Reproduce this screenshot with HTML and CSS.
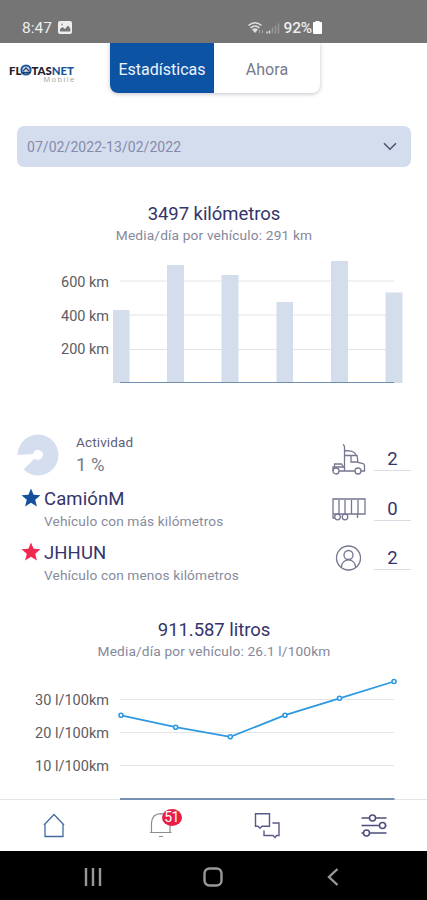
FILE: index.html
```
<!DOCTYPE html>
<html lang="es">
<head>
<meta charset="utf-8">
<title>Flotasnet Mobile</title>
<meta name="viewport" content="width=device-width, initial-scale=1.0">
<link rel="stylesheet" href="styles.css">
</head>
<body>
<div class="phone">
	<div class="status-bar">
		<span class="status-time">8:47</span>
		<svg class="status-picture" width="14" height="13" viewBox="0 0 14 13">
			<rect width="14" height="13" rx="2" fill="#eee"/>
			<path d="M2 10.5V8l2.500-2 2.500 2 3-3.500 2.300 3v3z" fill="#777"/>
			<circle cx="4" cy="3.500" r="1" fill="#999"/>
		</svg>
		<svg class="status-signal" width="34" height="14" viewBox="0 0 34 14">
			<g fill="none" stroke="#ddd" stroke-width="1.600">
				<path d="M1.500 4.500Q8 -1 14.500 4.500"/>
				<path d="M3.500 7Q8 3 12.500 7"/>
			</g>
			<path d="M5 8.500Q8 6 11 8.500L8 12z" fill="#ddd"/>
			<path d="M12.500 12v-3M15.500 12v-3" stroke="#aaa" stroke-width="1"/>
			<path d="M20 12.500v-2M22.500 12.500v-3" stroke="#ddd" stroke-width="1.500"/>
			<path d="M25.500 12.500v-6M28.500 12.500v-8M31.500 12.500v-10" stroke="#999" stroke-width="1.500"/>
		</svg>
		<span class="status-battery">92%</span>
		<svg width="9" height="13" viewBox="0 0 9 13">
			<path d="M2.500 0h4v1H8a1 1 0 0 1 1 1v10a1 1 0 0 1-1 1H1a1 1 0 0 1-1-1V2a1 1 0 0 1 1-1h1.500z" fill="#fff"/>
		</svg>
	</div>

	<div class="content">
		<div class="header">
			<div class="logo">
				<div class="logo-name">
					<span>FL</span>
					<svg width="12" height="12" viewBox="0 0 12 12">
						<circle cx="6" cy="6" r="4.600" fill="#dce8f5" stroke="#1e579c" stroke-width="2"/>
						<path d="M1 8.500h10M3 7l3-3 3 3" fill="none" stroke="#1e3f70" stroke-width="1.300"/>
					</svg>
					<span>TAS</span><span class="logo-net">NET</span>
				</div>
				<div class="logo-sub">Mobile</div>
			</div>
			<div class="tabs">
				<div class="tab active">Estadísticas</div>
				<div class="tab">Ahora</div>
			</div>
		</div>

		<div class="date-select">
			<span>07/02/2022-13/02/2022</span>
			<svg width="14" height="9" viewBox="0 0 14 9">
				<path d="M1 1.200l6 6 6-6" fill="none" stroke="#4c5370" stroke-width="1.600"/>
			</svg>
		</div>

		<div class="chart-head">
			<div class="chart-title">3497 kilómetros</div>
			<div class="chart-sub">Media/día por vehículo: 291 km</div>
		</div>
		<svg class="chart" width="427" height="145" viewBox="0 250 427 145">
			<path class="grid" d="M120 281H394M120 315H394M120 349.500H394"/>
			<g class="bars">
				<rect x="113" y="310" width="16.500" height="73"/>
				<rect x="167" y="265" width="17" height="118"/>
				<rect x="221.500" y="275" width="17" height="108"/>
				<rect x="276.500" y="302" width="16.500" height="81"/>
				<rect x="331" y="261" width="17" height="122"/>
				<rect x="385.500" y="292.500" width="17" height="90.500"/>
			</g>
			<path class="base" d="M120 382.500H394"/>
			<g class="labels">
				<text x="109" y="286.500" textLength="48">600 km</text>
				<text x="109" y="320.500" textLength="48">400 km</text>
				<text x="109" y="354" textLength="48">200 km</text>
			</g>
		</svg>

		<div class="stats">
			<div class="stats-left">
				<div class="activity">
					<svg width="42" height="42" viewBox="0 0 42 42">
						<path d="M0.500 21A20.500 20.500 0 1 1 6.500 35.500L17.500 24.500A5 5 0 1 0 16 20z" fill="#d4deee"/>
					</svg>
					<div>
						<div class="activity-name">Actividad</div>
						<div class="activity-value">1 %</div>
					</div>
				</div>
				<div class="vehicle">
					<svg width="20" height="20" viewBox="0 0 20 20">
						<path d="M10 .5l2.600 6.300 6.900.5-5.300 4.400 1.700 6.800-5.900-3.700-5.900 3.700 1.700-6.800L.5 7.300l6.900-.5z" fill="#14509c"/>
					</svg>
					<div>
						<div class="vehicle-name">CamiónM</div>
						<div class="vehicle-note">Vehículo con más kilómetros</div>
					</div>
				</div>
				<div class="vehicle">
					<svg width="20" height="20" viewBox="0 0 20 20">
						<path d="M10 .5l2.600 6.300 6.900.5-5.300 4.400 1.700 6.800-5.900-3.700-5.900 3.700 1.700-6.800L.5 7.300l6.900-.5z" fill="#f22850"/>
					</svg>
					<div>
						<div class="vehicle-name">JHHUN</div>
						<div class="vehicle-note">Vehículo con menos kilómetros</div>
					</div>
				</div>
			</div>
			<div class="stats-right">
				<div class="count">
					<!-- truck -->
					<svg class="line-icon" width="36" height="32" viewBox="0 0 36 32">
						<path d="M8 27h5.500M13.500 27V3q0-1.500-1.500-2.500M14 6.500l6 .7q4 .8 5 4.300M14 11.500h12l1 7 5 1.200q1.500.5 1.500 2V27H30M20 12v6h7M13.500 27H24M2 27v-4h11.500M3.500 23v-3h7l2 3"/>
						<circle cx="5" cy="27" r="3"/>
						<circle cx="27" cy="27" r="3"/>
					</svg>
					<span>2</span>
				</div>
				<div class="count">
					<!-- trailer -->
					<svg class="line-icon" width="36" height="32" viewBox="0 0 36 32">
						<path d="M2 5h32v15H2zM8 6v14M14 6v14M20.500 6v14M27 6v14M2 20v4h2M26.500 20.500v3.500"/>
						<circle cx="6.500" cy="23" r="2.800"/>
						<circle cx="14" cy="23" r="2.800"/>
					</svg>
					<span>0</span>
				</div>
				<div class="count">
					<!-- driver -->
					<svg class="line-icon" width="36" height="32" viewBox="0 0 36 32">
						<circle cx="17.500" cy="15" r="12"/>
						<circle cx="17.500" cy="12" r="4.500"/>
						<path d="M10.500 24.800v-1a7 7 0 0 1 14 0v1"/>
					</svg>
					<span>2</span>
				</div>
			</div>
		</div>

		<div class="chart-head">
			<div class="chart-title">911.587 litros</div>
			<div class="chart-sub">Media/día por vehículo: 26.1 l/100km</div>
		</div>
		<svg class="chart" width="427" height="134" viewBox="0 666 427 134">
			<path class="grid" d="M120 699.500H394M120 732.500H394M120 765.500H394M0 799.500H427"/>
			<g class="labels">
				<text x="109" y="705" textLength="74">30 l/100km</text>
				<text x="109" y="738" textLength="74">20 l/100km</text>
				<text x="109" y="771" textLength="74">10 l/100km</text>
			</g>
			<path class="serie" d="M121 715.300L175.700 727.200L230.300 736.800L285 715.200L339.500 698.300L394 681.500"/>
			<g class="dots">
				<circle cx="121" cy="715.300" r="2"/>
				<circle cx="175.700" cy="727.200" r="2"/>
				<circle cx="230.300" cy="736.800" r="2"/>
				<circle cx="285" cy="715.200" r="2"/>
				<circle cx="339.500" cy="698.300" r="2"/>
				<circle cx="394" cy="681.500" r="2"/>
			</g>
			<path class="base thick" d="M120 799H394.500"/>
		</svg>
	</div>

	<div class="nav">
		<a class="nav-item">
			<svg width="24" height="26" viewBox="0 0 24 26" fill="none" stroke="#426a9f" stroke-width="1.300">
				<path d="M2 12L12 1.500 22 12M3 11v12.500h18V11"/>
			</svg>
		</a>
		<a class="nav-item">
			<svg width="24" height="26" viewBox="0 0 24 26" fill="none" stroke="#8b8b92" stroke-width="1.200">
				<path d="M2.500 19V9.500Q3 1 12 .7q9 .3 9 8.800V19M1 19.500h21.500M10 23.500h4"/>
			</svg>
			<span class="badge">51</span>
		</a>
		<a class="nav-item">
			<svg width="26" height="26" viewBox="0 0 26 26" fill="none" stroke="#595a88" stroke-width="1.400">
				<path d="M3 .8h12.500V13.300H8l-2 2-2-2H1.500V.8z"/>
				<path d="M18.500 10H25v12.500H22.500l-1.500 2-2-2H10V17.500"/>
			</svg>
		</a>
		<a class="nav-item">
			<svg width="26" height="26" viewBox="0 0 26 26" fill="#fff" stroke="#4c4d7c" stroke-width="1.500">
				<path d="M.5 5h25M.5 12.500h25M.5 20h25"/>
				<circle cx="11.500" cy="5" r="3"/>
				<circle cx="21.500" cy="12.500" r="3"/>
				<circle cx="5.500" cy="20" r="3"/>
			</svg>
		</a>
	</div>

	<div class="system-nav">
		<svg width="18" height="18" viewBox="0 0 18 18"><path d="M2 0v18M9 0v18M16 0v18"/></svg>
		<svg width="20" height="20" viewBox="0 0 20 20"><rect x="1.500" y="1.500" width="17" height="17" rx="5"/></svg>
		<svg width="18" height="18" viewBox="0 0 18 18"><path d="M13.500 1L5 9l8.500 8"/></svg>
	</div>
</div>
</body>
</html>
```
FILE: styles.css
```
html, body {
	margin: 0;
	padding: 0;
	background: #fff;
}

body {
	font-family: Roboto, "Liberation Sans", sans-serif;
	color: #34346a;
}

svg {
	display: block;
	flex: none;
}

.phone {
	display: flex;
	flex-direction: column;
	width: 427px;
	height: 900px;
	overflow: hidden;
}

/* status bar */
.status-bar {
	display: flex;
	align-items: center;
	box-sizing: border-box;
	flex: none;
	height: 43px;
	padding: 12px 105px 0 22px;
	background: #757575;
	color: #eee;
}

.status-time {
	font-size: 15.5px;
	line-height: 18px;
}

.status-picture {
	margin-left: 6px;
}

.status-signal {
	margin-left: auto;
	margin-right: 3px;
}

.status-battery {
	font-size: 15.5px;
	line-height: 18px;
	font-weight: 500;
	letter-spacing: -0.2px;
	margin-right: 1px;
}

.content {
	flex: none;
	height: 757px;
	overflow: hidden;
}

/* header */
.header {
	display: flex;
	height: 83px;
}

.logo {
	width: 67px;
	padding: 20px 34px 0 9px;
}

.logo-name {
	display: flex;
	align-items: center;
	height: 14px;
	font-family: Lato, sans-serif;
	font-size: 11.4px;
	font-weight: 900;
	color: #202028;
}

.logo-name svg {
	margin: 0 -1px;
}

.logo-net {
	color: #1c559c;
}

.logo-sub {
	font-family: "Liberation Sans", sans-serif;
	font-size: 8px;
	line-height: 6px;
	letter-spacing: 1.5px;
	text-align: right;
	color: #aaa;
}

.tabs {
	display: flex;
	width: 210px;
	height: 50px;
	border-radius: 0 0 8px 8px;
	box-shadow: 0 1px 4px rgba(60, 60, 90, 0.3);
	overflow: hidden;
}

.tab {
	display: flex;
	align-items: center;
	justify-content: center;
	box-sizing: border-box;
	width: 106px;
	padding-top: 2px;
	font-size: 16px;
	letter-spacing: 0.1px;
	color: #777a8c;
}

.tab.active {
	width: 104px;
	background: #0d53a4;
	color: #eef3fa;
	letter-spacing: 0;
}

/* date range */
.date-select {
	display: flex;
	align-items: center;
	justify-content: space-between;
	box-sizing: border-box;
	width: 394px;
	height: 41px;
	margin-left: 17px;
	padding: 0 14px 0 10px;
	border-radius: 7px;
	background: #d4ddee;
	color: #858ba9;
	font-size: 14px;
	letter-spacing: 0.06px;
}

/* charts */
.chart-head {
	box-sizing: border-box;
	height: 83px;
	padding: 36px 0 0 1px;
	text-align: center;
}

.chart-title {
	font-size: 18.5px;
	line-height: 22px;
	letter-spacing: -0.05px;
}

.chart-sub {
	font-size: 13.7px;
	line-height: 21px;
	letter-spacing: 0.16px;
	color: #85889a;
}

.grid {
	stroke: #e4e4e6;
}

.bars {
	fill: #d3ddec;
}

.base {
	stroke: #6f8eb0;
}

.base.thick {
	stroke: #7690b2;
	stroke-width: 2;
}

.labels {
	font-size: 14.5px;
	text-anchor: end;
	fill: #5c5c62;
}

.serie {
	fill: none;
	stroke: #2e99e2;
	stroke-width: 1.8;
}

.dots {
	fill: #fff;
	stroke: #2e99e2;
	stroke-width: 1.6;
}

/* summary */
.stats {
	display: flex;
	justify-content: space-between;
	box-sizing: border-box;
	height: 188px;
	padding: 39px 16px 0 17px;
}

.activity {
	display: flex;
	gap: 17px;
	height: 52px;
}

.activity-name {
	font-size: 13.5px;
	line-height: 17px;
	letter-spacing: 0.15px;
	color: #5c5e7c;
}

.activity-value {
	font-size: 18.5px;
	line-height: 28px;
	color: #777a8c;
}

.vehicle {
	display: flex;
	gap: 3px;
	height: 54px;
	padding-left: 4px;
}

.vehicle svg {
	margin-top: 2px;
}

.vehicle-name {
	font-size: 18.5px;
	line-height: 27px;
	letter-spacing: 0.1px;
}

.vehicle-note {
	font-size: 13.7px;
	line-height: 16px;
	letter-spacing: 0.12px;
	color: #888b9d;
}

.count {
	display: flex;
	justify-content: space-between;
	width: 80px;
	height: 49.5px;
}

.count svg {
	margin-top: 10px;
}

.count span {
	box-sizing: border-box;
	width: 37px;
	height: 37px;
	padding-top: 12px;
	border-bottom: 1px solid #dcdce4;
	font-size: 18.5px;
	line-height: 26px;
	text-align: center;
}

.line-icon {
	fill: none;
	stroke: #74778f;
	stroke-width: 1.3;
}

/* bottom navigation */
.nav {
	display: flex;
	flex: none;
	box-sizing: border-box;
	height: 51px;
	padding-left: 1px;
}

.nav-item {
	display: flex;
	justify-content: center;
	position: relative;
	flex: 1;
	padding-top: 13px;
}

.badge {
	position: absolute;
	left: 54px;
	top: 9px;
	width: 20px;
	height: 17px;
	border-radius: 50%;
	background: #e91d45;
	color: #fff;
	font-size: 14px;
	line-height: 17px;
	letter-spacing: -0.5px;
	text-align: center;
}

.system-nav {
	display: flex;
	align-items: center;
	gap: 101px;
	flex: none;
	box-sizing: border-box;
	height: 49px;
	padding: 2px 0 0 84px;
	background: #000;
}

.system-nav svg {
	fill: none;
	stroke: #999;
	stroke-width: 2.4;
}
```
